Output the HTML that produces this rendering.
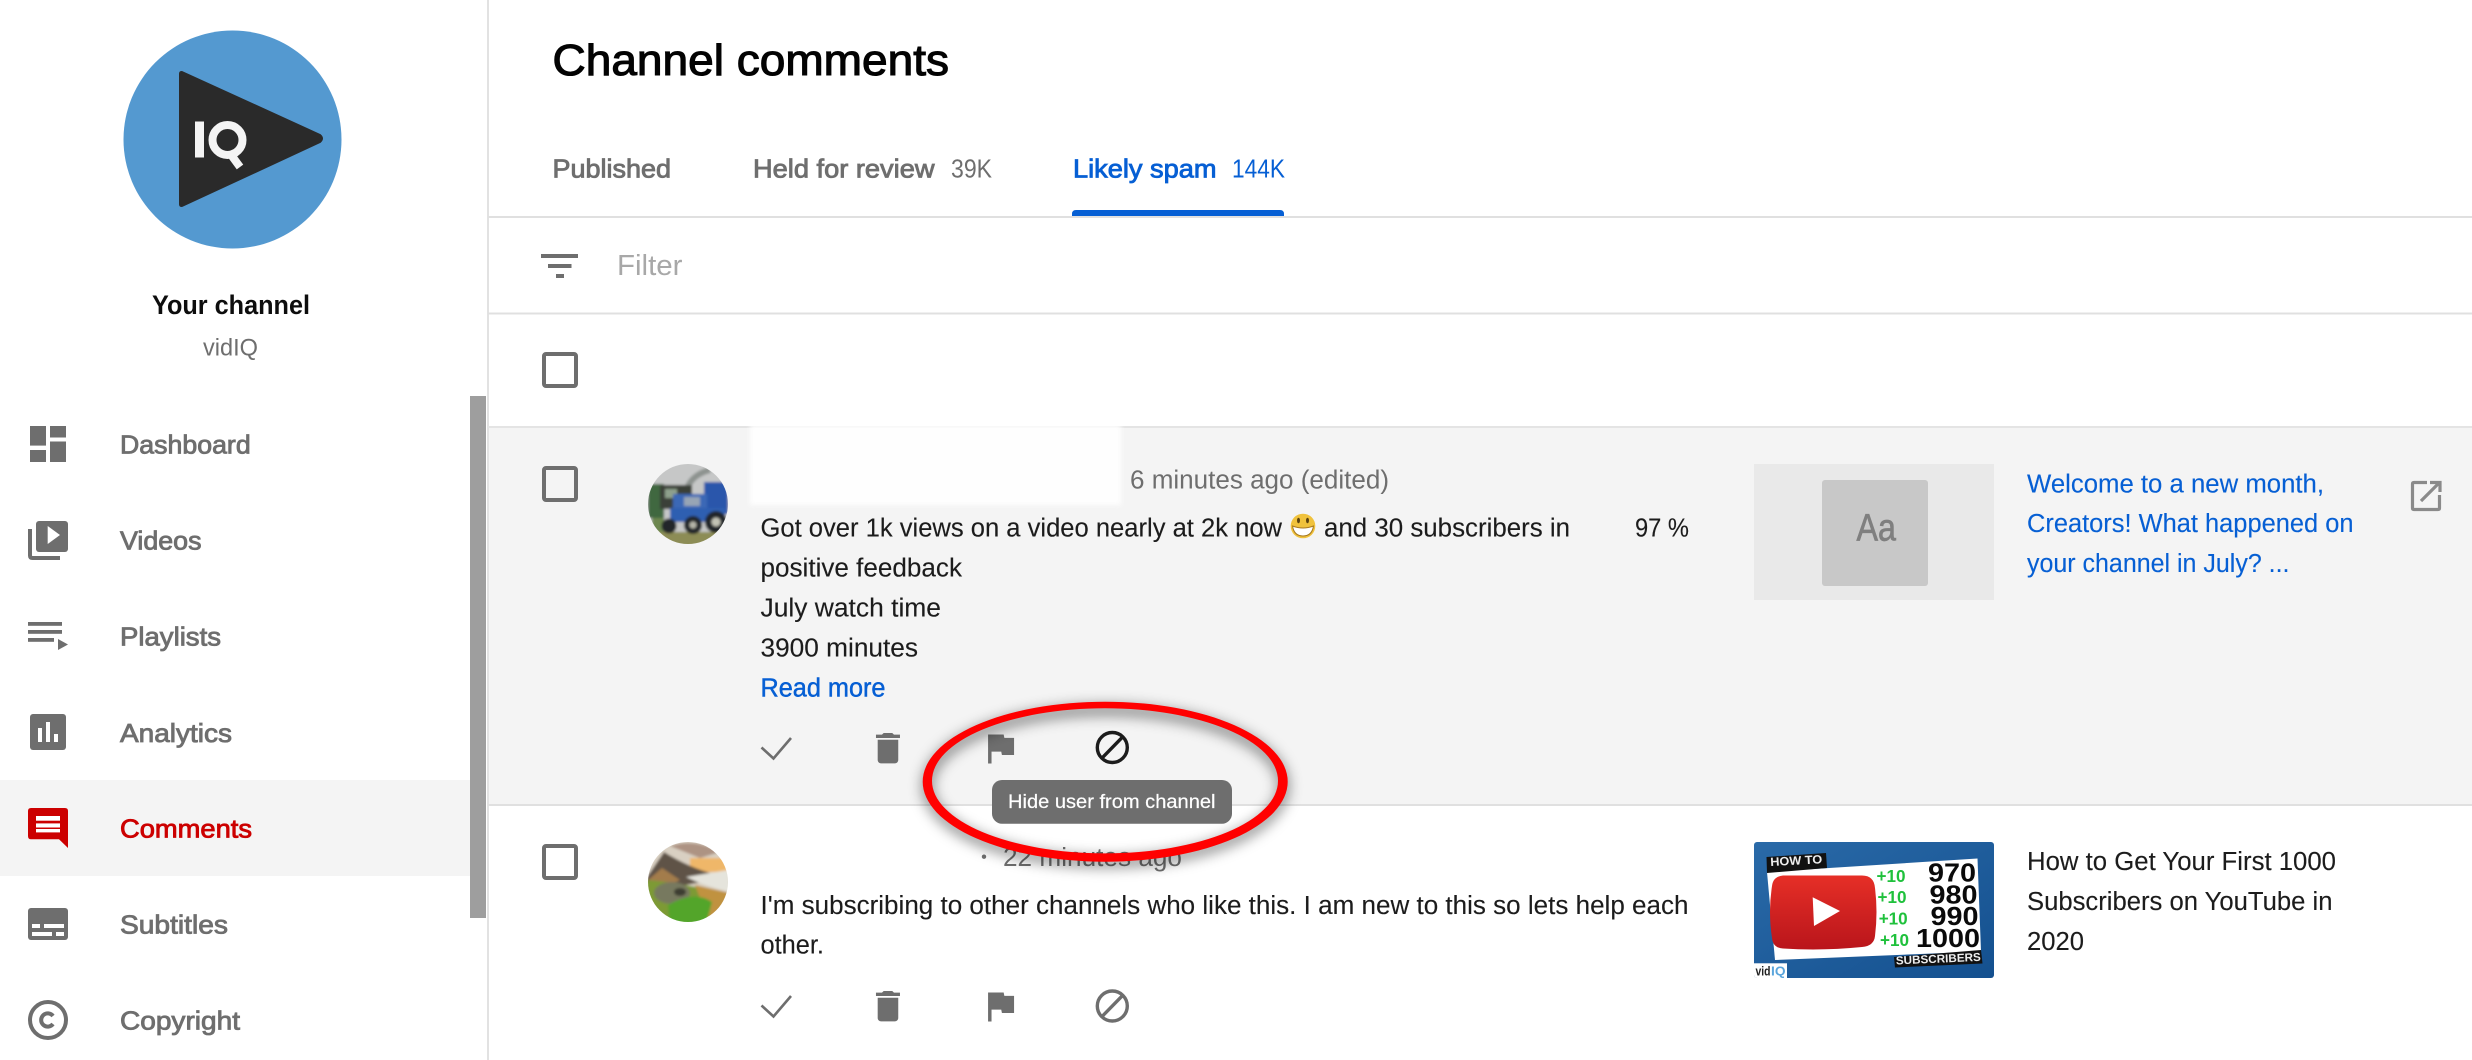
<!DOCTYPE html>
<html lang="en"><head><meta charset="utf-8"><title>Channel comments</title>
<style>
html,body{margin:0;padding:0;background:#fff;width:2472px;height:1060px;overflow:hidden}
svg{display:block}
text{font-family:"Liberation Sans",Arial,sans-serif;white-space:pre}
.nav{font-size:26px;fill:#6e6e6e;stroke:#6e6e6e;stroke-width:.85}
.body{font-size:25.5px;fill:#1c1c1c;stroke:#1c1c1c;stroke-width:.12}
.meta{font-size:25.5px;fill:#6e6e6e}
.blue{fill:#065fd4;stroke:#065fd4;stroke-width:.12}
.i{fill:#6e6e6e}
</style></head><body>
<svg xmlns="http://www.w3.org/2000/svg" width="2472" height="1060" viewBox="0 0 2472 1060">
<defs>
<filter id="b3" x="-5%" y="-10%" width="110%" height="120%"><feGaussianBlur stdDeviation="2.5"/></filter>
<filter id="b1" x="-10%" y="-10%" width="120%" height="120%"><feGaussianBlur stdDeviation="1.4"/></filter>
<filter id="sh" x="-15%" y="-30%" width="130%" height="160%"><feGaussianBlur stdDeviation="7"/></filter>
<clipPath id="av1"><circle cx="688" cy="504" r="40"/></clipPath>
<clipPath id="av2"><circle cx="688" cy="882" r="40"/></clipPath>
<clipPath id="th2"><rect x="1754" y="842" width="240" height="136" rx="3"/></clipPath>
<linearGradient id="red" x1="0" y1="0" x2="0" y2="1"><stop offset="0" stop-color="#e62f27"/><stop offset="1" stop-color="#b9151b"/></linearGradient>
<linearGradient id="bl" x1="0" y1="0" x2="1" y2="1"><stop offset="0" stop-color="#2a6aa8"/><stop offset="1" stop-color="#14508f"/></linearGradient>
</defs>

<rect width="2472" height="1060" fill="#fff"/>

<!-- row backgrounds and separators -->
<rect x="488" y="427" width="1984" height="378" fill="#f4f4f4"/>
<rect x="487" y="0" width="2" height="1060" fill="#e2e2e2"/>
<rect x="488" y="216" width="1984" height="2" fill="#e0e0e0"/>
<rect x="488" y="312.5" width="1984" height="2" fill="#e0e0e0"/>
<rect x="488" y="426" width="1984" height="2" fill="#e4e4e4"/>
<rect x="488" y="804" width="1984" height="2" fill="#e0e0e0"/>

<!-- channel avatar -->
<circle cx="232.5" cy="139.5" r="109" fill="#5499d0"/>
<path d="M180 74 Q180 71 183 72.5 L320 135 Q324 138.6 320 142 L183 205.5 Q180 207 180 204 Z" fill="#2a2a2a" stroke="#2a2a2a" stroke-width="2" stroke-linejoin="round"/>
<rect x="195" y="121.5" width="9" height="36" fill="#f4f4f4"/>
<circle cx="227.5" cy="140" r="15" fill="none" stroke="#f4f4f4" stroke-width="8"/>
<path d="M229 152 L240 167" stroke="#f4f4f4" stroke-width="8" fill="none"/>
<text x="152" y="314" font-size="27" font-weight="bold" fill="#0d0d0d" textLength="158" lengthAdjust="spacingAndGlyphs">Your channel</text>
<text x="203" y="355.5" font-size="24" fill="#6e6e6e" textLength="55" lengthAdjust="spacingAndGlyphs">vidIQ</text>

<!-- nav -->
<rect x="0" y="780" width="470" height="96" fill="#f4f4f4"/>
<g class="i">
<rect x="30" y="426" width="16" height="19.6"/><rect x="50" y="426" width="16" height="11.5"/>
<rect x="30" y="450" width="16" height="12"/><rect x="50" y="441.5" width="16" height="20.5"/>
<rect x="36" y="521" width="32" height="31" rx="3"/>
<rect x="28" y="622" width="34" height="3.8"/><rect x="28" y="630" width="34" height="3.8"/><rect x="28" y="638" width="26" height="3.8"/>
<path d="M58 639 L68 644.5 L58 650 Z"/>
<rect x="30" y="714" width="36" height="36" rx="3"/>
<rect x="28" y="908" width="40" height="32" rx="3"/>
</g>
<path d="M30 529 V555.5 Q30 558 32.5 558 H60" fill="none" stroke="#6e6e6e" stroke-width="4"/>
<path d="M47.7 526 L60 535 L47.7 544 Z" fill="#fff"/>
<g fill="#fff">
<rect x="38" y="728" width="4" height="14"/><rect x="46" y="722" width="4" height="20"/><rect x="54" y="734" width="4" height="8"/>
<rect x="32" y="924" width="8" height="4"/><rect x="44" y="924" width="20" height="4"/>
<rect x="32" y="932" width="20" height="4"/><rect x="56" y="932" width="8" height="4"/>
</g>
<path d="M31 808 H65 Q68 808 68 811 V848 L59 839.3 H31 Q28 839.3 28 836 V811 Q28 808 31 808 Z" fill="#cc0000"/>
<g fill="#fff"><rect x="36" y="816" width="24" height="4.7"/><rect x="36" y="823.4" width="24" height="4.1"/><rect x="36" y="829" width="24" height="3.4"/></g>
<circle cx="48" cy="1020" r="18" fill="none" stroke="#6e6e6e" stroke-width="4"/>
<path d="M53 1016 A6.6 6.6 0 1 0 53 1024" fill="none" stroke="#6e6e6e" stroke-width="4"/>

<text class="nav" x="120" y="453.7" textLength="130.7" lengthAdjust="spacingAndGlyphs">Dashboard</text>
<text class="nav" x="120" y="549.6" textLength="81.5" lengthAdjust="spacingAndGlyphs">Videos</text>
<text class="nav" x="120" y="645.6" textLength="101" lengthAdjust="spacingAndGlyphs">Playlists</text>
<text class="nav" x="120" y="741.8" textLength="112" lengthAdjust="spacingAndGlyphs">Analytics</text>
<text class="nav" x="120" y="837.6" textLength="132" lengthAdjust="spacingAndGlyphs" style="fill:#cc0000;stroke:#cc0000">Comments</text>
<text class="nav" x="120" y="933.6" textLength="108" lengthAdjust="spacingAndGlyphs">Subtitles</text>
<text class="nav" x="120" y="1029.7" textLength="120" lengthAdjust="spacingAndGlyphs">Copyright</text>

<rect x="470" y="396" width="16" height="522" fill="#9e9e9e"/>

<!-- header -->
<text x="552.5" y="75" font-size="44" fill="#030303" stroke="#030303" stroke-width="1.1" textLength="396.5" lengthAdjust="spacingAndGlyphs">Channel comments</text>
<text class="nav" x="552.5" y="177.5" textLength="118.5" lengthAdjust="spacingAndGlyphs">Published</text>
<text class="nav" x="753" y="177.5" textLength="181.5" lengthAdjust="spacingAndGlyphs">Held for review</text>
<text x="951" y="177.5" font-size="25.5" fill="#6e6e6e" textLength="41" lengthAdjust="spacingAndGlyphs">39K</text>
<text class="nav" x="1073" y="177.5" textLength="143.5" lengthAdjust="spacingAndGlyphs" style="fill:#065fd4;stroke:#065fd4">Likely spam</text>
<text x="1232" y="177.5" font-size="25.5" fill="#065fd4" textLength="53" lengthAdjust="spacingAndGlyphs">144K</text>
<path d="M1072 216 V214 Q1072 210 1076 210 H1280 Q1284 210 1284 214 V216 Z" fill="#065fd4"/>

<!-- filter -->
<g class="i"><rect x="541" y="254" width="37" height="4"/><rect x="548" y="264" width="23.5" height="4"/><rect x="556" y="274" width="8" height="4"/></g>
<text x="617" y="275" font-size="29" fill="#a8a8a8" textLength="65.5" lengthAdjust="spacingAndGlyphs">Filter</text>

<!-- checkboxes -->
<g fill="none" stroke="#6e6e6e" stroke-width="4">
<rect x="544" y="354" width="32" height="32" rx="2"/>
<rect x="544" y="468" width="32" height="32" rx="2"/>
<rect x="544" y="846" width="32" height="32" rx="2"/>
</g>

<!-- row 1 -->
<g clip-path="url(#av1)"><g filter="url(#b1)">
<rect x="640" y="460" width="96" height="90" fill="#c6c7c7"/>
<path d="M688 486 Q694 474 710 470" stroke="#8d938f" stroke-width="6" fill="none"/>
<rect x="648" y="484" width="16" height="34" fill="#41683f"/>
<rect x="660" y="485" width="32" height="24" fill="#3b4137"/>
<rect x="665" y="489" width="12" height="9" fill="#8ea08c"/>
<rect x="704" y="482" width="24" height="32" fill="#2b57ab"/>
<rect x="673" y="494" width="34" height="22" fill="#3a68b6"/>
<rect x="684" y="497" width="16" height="9" fill="#97a5b5"/>
<rect x="670" y="508" width="55" height="14" fill="#2f5eb1"/>
<rect x="640" y="532" width="96" height="20" fill="#8c8c55"/>
<rect x="652" y="518" width="12" height="14" fill="#6d8750"/>
<circle cx="669" cy="526" r="7.5" fill="#23272a"/>
<circle cx="693" cy="525" r="9" fill="#23272a"/><circle cx="693" cy="525" r="3.5" fill="#b5b5a8"/>
<circle cx="716" cy="522" r="11" fill="#23272a"/><circle cx="716" cy="522" r="4.5" fill="#c2c2b5"/>
</g></g>
<rect x="750" y="425" width="371" height="80" fill="#fefefe" filter="url(#b3)"/>
<text class="meta" x="1130" y="488.7" textLength="259" lengthAdjust="spacingAndGlyphs">6 minutes ago (edited)</text>
<text class="body" x="760.5" y="536.5" textLength="521.5" lengthAdjust="spacingAndGlyphs">Got over 1k views on a video nearly at 2k now</text>
<circle cx="1303" cy="526" r="12.3" fill="#f0c23c"/>
<path d="M1292.5 526 Q1303 530 1313.5 526 Q1312 536 1303 536 Q1294 536 1292.5 526 Z" fill="#fff" stroke="#a87a20" stroke-width="1"/>
<ellipse cx="1298.5" cy="520.5" rx="1.5" ry="2.8" fill="#5a4210"/><ellipse cx="1307.5" cy="520.5" rx="1.5" ry="2.8" fill="#5a4210"/>
<text class="body" x="1324" y="536.5" textLength="246" lengthAdjust="spacingAndGlyphs">and 30 subscribers in</text>
<text class="body" x="1635" y="536.5" textLength="54" lengthAdjust="spacingAndGlyphs">97 %</text>
<text class="body" x="760.5" y="576.7" textLength="201.5" lengthAdjust="spacingAndGlyphs">positive feedback</text>
<text class="body" x="760.5" y="616.6" textLength="180.5" lengthAdjust="spacingAndGlyphs">July watch time</text>
<text class="body" x="760.5" y="656.5" textLength="157.5" lengthAdjust="spacingAndGlyphs">3900 minutes</text>
<text x="760.5" y="696.4" font-size="25.5" fill="#065fd4" stroke="#065fd4" stroke-width=".45" textLength="125" lengthAdjust="spacingAndGlyphs">Read more</text>

<!-- row 1 actions -->
<path d="M761.5 747.5 L773.5 758.5 L791 738" fill="none" stroke="#6e6e6e" stroke-width="2.6"/>
<path transform="translate(867.4 727.9) scale(1.714 1.69)" class="i" d="M6 19c0 1.1.9 2 2 2h8c1.1 0 2-.9 2-2V7H6v12zM19 4h-3.5l-1-1h-5l-1 1H5v2h14V4z"/>
<path transform="translate(979.4 727.7) scale(1.733 1.706)" class="i" d="M14.4 6L14 4H5v17h2v-7h5.6l.4 2h7V6z"/>
<circle cx="1112.3" cy="747.5" r="15" fill="none" stroke="#1c1c1c" stroke-width="3.4"/>
<path d="M1102 758 L1122.5 737" stroke="#1c1c1c" stroke-width="3.4" fill="none"/>

<!-- thumbnail 1 -->
<rect x="1754" y="464" width="240" height="136" fill="#e9e9e9"/>
<rect x="1822" y="480" width="106" height="106" rx="3" fill="#c8c8c8"/>
<text x="1856.5" y="540.7" font-size="38" fill="#7f7f7f" stroke="#7f7f7f" stroke-width=".7" textLength="39.5" lengthAdjust="spacingAndGlyphs">Aa</text>
<text class="blue" font-size="25.5" x="2027" y="492.3" textLength="297" lengthAdjust="spacingAndGlyphs">Welcome to a new month,</text>
<text class="blue" font-size="25.5" x="2027" y="532.2" textLength="326.5" lengthAdjust="spacingAndGlyphs">Creators! What happened on</text>
<text class="blue" font-size="25.5" x="2027" y="572.1" textLength="262.5" lengthAdjust="spacingAndGlyphs">your channel in July? ...</text>
<path d="M2427 482.5 H2414 Q2412.5 482.5 2412.5 484 V508 Q2412.5 509.5 2414 509.5 H2438 Q2439.5 509.5 2439.5 508 V495" fill="none" stroke="#8a8a8a" stroke-width="3.2"/>
<path d="M2421 501 L2439 483 M2430 482.5 H2440 V492" fill="none" stroke="#8a8a8a" stroke-width="3.2"/>

<!-- row 2 -->
<g clip-path="url(#av2)"><g filter="url(#b1)">
<rect x="640" y="838" width="96" height="90" fill="#d9d0c2"/>
<path d="M670 846 Q695 838 720 852 L700 858 Z" fill="#ad9383"/>
<rect x="690" y="858" width="40" height="14" fill="#efb769"/>
<path d="M645 880 L664 852 Q690 868 714 874 L712 880 L650 892 Z" fill="#5f5246"/>
<path d="M648 880 L662 868 L680 880 L660 890 Z" fill="#a37b4c"/>
<path d="M686 877 L728 870 L730 892 Q705 886 686 877 Z" fill="#e5e4dc"/>
<path d="M646 880 Q680 882 730 895 L730 925 L646 925 Z" fill="#7d9a35"/>
<path d="M695 885 L730 893 L730 925 L710 925 Z" fill="#c0923f"/>
<ellipse cx="672" cy="893" rx="18" ry="11" fill="#77795f"/>
<ellipse cx="680" cy="892" rx="6" ry="4" fill="#3c3c30"/>
<path d="M668 905 Q695 890 712 902 L706 925 L670 925 Z" fill="#53a52c"/>
</g></g>
<circle cx="984" cy="856.7" r="2.2" fill="#6e6e6e"/>
<text class="meta" x="1003" y="866" textLength="179" lengthAdjust="spacingAndGlyphs">22 minutes ago</text>
<text class="body" x="760.5" y="914" textLength="928" lengthAdjust="spacingAndGlyphs">I'm subscribing to other channels who like this. I am new to this so lets help each</text>
<text class="body" x="760.5" y="953.7" textLength="63.5" lengthAdjust="spacingAndGlyphs">other.</text>

<path d="M761.5 1005.5 L773.5 1016.5 L791 996" fill="none" stroke="#6e6e6e" stroke-width="2.6"/>
<path transform="translate(867.4 985.9) scale(1.714 1.69)" class="i" d="M6 19c0 1.1.9 2 2 2h8c1.1 0 2-.9 2-2V7H6v12zM19 4h-3.5l-1-1h-5l-1 1H5v2h14V4z"/>
<path transform="translate(979.4 985.7) scale(1.733 1.706)" class="i" d="M14.4 6L14 4H5v17h2v-7h5.6l.4 2h7V6z"/>
<circle cx="1112.3" cy="1006" r="15" fill="none" stroke="#6e6e6e" stroke-width="3.4"/>
<path d="M1102 1016.5 L1122.5 995.5" stroke="#6e6e6e" stroke-width="3.4" fill="none"/>

<!-- thumbnail 2 -->
<g clip-path="url(#th2)">
<rect x="1754" y="842" width="240" height="136" fill="url(#bl)"/>
<path d="M1767 872 L1977.5 858.5 L1981 951.5 L1775 960 Z" fill="#fff"/>
<path d="M1766.5 857 L1826 853 L1827 868 L1767 873 Z" fill="#111"/>
<path d="M1894 957 L1981 950 L1982.5 963.5 L1895 967.5 Z" fill="#111"/>
<path d="M1783 875.5 H1862 Q1874 875.5 1875 888 Q1878 912 1875 936 Q1874 946 1862 947 Q1822 951 1783 948.5 Q1773 948 1772 938 Q1768 912 1772 886 Q1773 876.5 1783 875.5 Z" fill="url(#red)"/>
<path d="M1812.7 897.3 L1840 911 L1814 926 Z" fill="#fff"/>
<g font-weight="bold" fill="#1fc13c" font-size="17.5">
<text x="1876.5" y="882" textLength="29" lengthAdjust="spacingAndGlyphs">+10</text>
<text x="1877.5" y="903" textLength="29" lengthAdjust="spacingAndGlyphs">+10</text>
<text x="1878.7" y="924.5" textLength="29" lengthAdjust="spacingAndGlyphs">+10</text>
<text x="1880" y="946" textLength="29" lengthAdjust="spacingAndGlyphs">+10</text>
</g>
<g font-weight="bold" fill="#0a0a0a" font-size="26">
<text x="1928" y="881.5" textLength="48" lengthAdjust="spacingAndGlyphs">970</text>
<text x="1929.5" y="903.5" textLength="48" lengthAdjust="spacingAndGlyphs">980</text>
<text x="1930.5" y="925" textLength="48" lengthAdjust="spacingAndGlyphs">990</text>
<text x="1916" y="947" textLength="64" lengthAdjust="spacingAndGlyphs">1000</text>
</g>
<text x="1770.5" y="866" font-size="12" font-weight="bold" fill="#eee" textLength="52" lengthAdjust="spacingAndGlyphs" transform="rotate(-3 1770 866)">HOW TO</text>
<text x="1896" y="964.5" font-size="11.5" font-weight="bold" fill="#eee" textLength="85" lengthAdjust="spacingAndGlyphs" transform="rotate(-2.5 1896 964)">SUBSCRIBERS</text>
<rect x="1754" y="963.3" width="33" height="15" fill="#fff"/>
<text x="1755.5" y="975.5" font-size="12.5" font-weight="bold" fill="#222" textLength="15" lengthAdjust="spacingAndGlyphs">vid</text>
<text x="1771" y="975.5" font-size="12.5" font-weight="bold" fill="#5aa5dc" textLength="14.5" lengthAdjust="spacingAndGlyphs">IQ</text>
</g>
<text class="body" x="2027" y="870" textLength="309" lengthAdjust="spacingAndGlyphs">How to Get Your First 1000</text>
<text class="body" x="2027" y="910" textLength="305.5" lengthAdjust="spacingAndGlyphs">Subscribers on YouTube in</text>
<text class="body" x="2027" y="949.8" textLength="57" lengthAdjust="spacingAndGlyphs">2020</text>

<!-- tooltip -->
<rect x="992" y="780" width="240" height="43.7" rx="10" fill="#6e6e6e"/>
<text x="1008" y="808" font-size="19" fill="#fff" stroke="#fff" stroke-width=".2" textLength="207.5" lengthAdjust="spacingAndGlyphs">Hide user from channel</text>

<!-- red ellipse -->
<ellipse cx="1105.5" cy="786" rx="178" ry="76" fill="none" stroke="#000" stroke-opacity=".55" stroke-width="9" filter="url(#sh)"/>
<path fill="#ff0000" fill-rule="evenodd" d="M922.7 781.7 A182.5 80 0 1 1 1287.7 781.7 A182.5 80 0 1 1 922.7 781.7 Z M932 780.8 A173 72.5 0 1 0 1278 780.8 A173 72.5 0 1 0 932 780.8 Z"/>
</svg>
</body></html>
